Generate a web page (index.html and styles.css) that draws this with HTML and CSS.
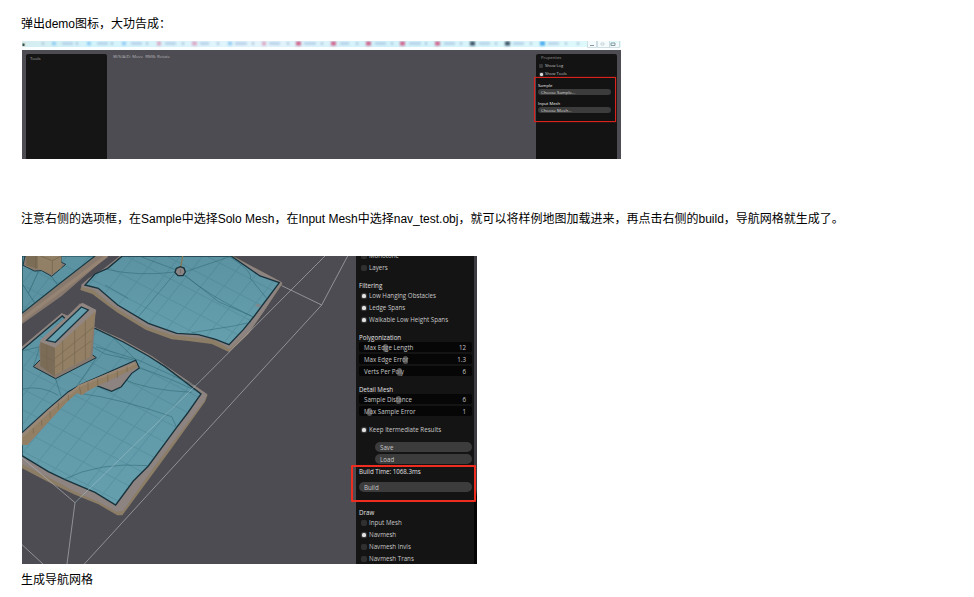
FILE: index.html
```html
<!DOCTYPE html>
<html lang="zh-CN">
<head>
<meta charset="utf-8">
<title>Recast Demo</title>
<link rel="stylesheet" href="styles.css">
</head>
<body>
<main>
<p class="intro">弹出demo图标，大功告成：</p>
<section class="demo">
  <div class="browser">
    <svg class="tabs" viewBox="22 41 599 9" width="599" height="9">
      <defs>
        <linearGradient id="sky"><stop offset="0" stop-color="#d5edf0"/><stop offset=".12" stop-color="#d3f4fb"/><stop offset=".4" stop-color="#e4f4fb"/><stop offset=".6" stop-color="#d2f2fa"/><stop offset="1" stop-color="#e0fafb"/></linearGradient>
        <filter id="soft" filterUnits="userSpaceOnUse" x="22" y="38" width="599" height="14"><feGaussianBlur stdDeviation=".8"/></filter>
      </defs>
      <rect x="22" y="41" width="599" height="9" fill="#fafefe"/>
      <rect x="22" y="41" width="599" height="6" fill="url(#sky)"/>
      <g filter="url(#soft)">
        <path d="M62 43.5h11M97 43.5h11M131 43.5h11M165 43.5h11M200 43.5h9M235 43.5h12M269 43.5h11M304 43.5h12M340 43.5h9M375 43.5h11M409 43.5h12M444 43.5h11M479 43.5h11M513 43.5h11M548 43.5h11" stroke="#a9c5e4" stroke-width="2"/>
        <path d="M42 43.5h2M76 43.5h2M111 43.5h2M146 43.5h2M182 43.5h2M217 43.5h2M252 43.5h2M287 43.5h2M321 43.5h2M356 43.5h2M391 43.5h2M425 43.5h2M460 43.5h2M495 43.5h2M530 43.5h2M565 43.5h2M577 43.5h2" stroke="#98afd0" stroke-width="2"/>
        <path d="M52 43.5h4M87 43.5h4M122 43.5h4M228 43.5h4" stroke="#8fcbf3" stroke-width="3.500"/>
        <path d="M157 43.5h4M192 43.5h5M262 43.5h4" stroke="#dca7c4" stroke-width="4"/>
        <path d="M296 43.5h5M331 43.5h5M366 43.5h5M400 43.5h5M435 43.5h5" stroke="#cf6088" stroke-width="4.2"/>
        <path d="M470 43.5h5M505 43.5h5" stroke="#364c60" stroke-width="4.2"/>
        <path d="M540 43.5h5" stroke="#42a8ee" stroke-width="4.2"/>
      </g>
      <path d="M587.500 41v6.500h9v-6.500M597.500 41v6.500h12v-6.500M609.500 47.500h10v-6.500" fill="#f4fbfd" stroke="#c3d0d6" stroke-width=".7"/>
      <path d="M590 45.500h4M611 43h4v2.500h-4z" fill="none" stroke="#8b999f"/><path d="M601 43h3v2h-3z" fill="none" stroke="#c9d5da"/>
      <rect x="22" y="42.500" width="4" height="4" fill="#d7dfdc"/><rect x="22.500" y="43.500" width="2" height="2.500" fill="#315344"/>
    </svg>
  </div>
  <div class="stage">
    <aside class="tools">Tools</aside>
    <span class="hint">W/S/A/D: Move &nbsp;RMB: Rotate</span>
    <aside class="props">
      <div class="title">Properties</div>
      <div class="opt"><i></i>Show Log</div>
      <div class="opt on"><i></i>Show Tools</div>
      <div class="choose">
        <b>Sample</b><span class="pill">Choose Sample...</span>
        <b class="second">Input Mesh</b><span class="pill">Choose Mesh...</span>
      </div>
    </aside>
  </div>
</section>
<p class="guide">注意右侧的选项框，在Sample中选择Solo Mesh，在Input Mesh中选择nav_test.obj，就可以将样例地图加载进来，再点击右侧的build，导航网格就生成了。</p>
<section class="result">
<svg class="scene" viewBox="21 18 1002 924" width="334" height="308">
  <defs>
    <pattern id="grid" width="48" height="44" patternUnits="userSpaceOnUse" patternTransform="matrix(1 .52 -.8 1 0 0)"><path d="M0 22H48M24 0V44" stroke="#2f6573" stroke-width="2.500" opacity=".2" fill="none"/></pattern>
    <linearGradient id="water" x2="0" y2="1"><stop stop-color="#5c93a2"/><stop offset="1" stop-color="#659fae"/></linearGradient>
  </defs>
  <rect x="21" y="18" width="1002" height="924" fill="#4d4c52"/>
  <!-- far left block -->
  <path d="M21 18H278L140 138L21 222Z" fill="#87796d"/>
  <path d="M21 215L278 22V18H266L21 202Z" fill="#958373"/>
  <path d="M21 18H240L128 105L21 190Z" fill="#5c93a2" stroke="#173b45" stroke-width="3.500"/>
  <path d="M21 18H240L128 105L21 190Z" fill="url(#grid)"/>
  <path d="M110 80L128 105M70 65L40 130L21 100M40 130L60 160" stroke="#2e6571" stroke-width="2" fill="none"/>
  <path d="M30 18L24 46L58 63L80 62L110 79L152 43L138 36V18Z" fill="#87796f" stroke="#173b45" stroke-width="3"/>
  <path d="M34 18H139V54L110 73L74 58L34 50Z" fill="#917f66"/>
  <path d="M34 18H68V56L34 47Z" fill="#7c6d57"/><path d="M76 18L112 32L139 18M112 32V72M62 18V56" stroke="#6f624c" stroke-width="2" fill="none"/>
  <!-- upper plateau -->
  <path d="M199 108L196 120L232 132L280 168L308 188L392 239L470 268L520 273L590 282L642 306L700 252L744 187L802 102L795 94L654 18H315L270 55Z" fill="#8b7d66"/>
  <path d="M199 104L200 111L235 119L290 165L310 178L392 229L470 255L535 262L595 268L644 297L704 242L746 185L802 98L795 94L650 18H315L270 53L222 84Z" fill="#8d8381"/>
  <path d="M322 18L278 55L240 72L210 105L250 115L308 165L400 220L485 250L550 254L602 268L642 284L685 239L718 198L793 98L735 78L648 18Z" fill="url(#water)" stroke="#17323c" stroke-width="4"/>
  <path d="M322 18L278 55L240 72L210 105L250 115L308 165L400 220L485 250L550 254L602 268L642 284L685 239L718 198L793 98L735 78L648 18Z" fill="url(#grid)"/>
  <path d="M275 58Q370 80 480 66M506 75Q590 142 713 200M510 75L610 155L713 200M480 70L366 205M372 18L490 62M512 65L650 18M640 18Q713 63 706 85L755 145M530 248L650 229L708 217M270 105L340 145" stroke="#29616e" stroke-width="2.500" fill="none" opacity=".55"/>
  <path d="M503 18L496 58" stroke="#877a55" stroke-width="4"/>
  <path d="M484 55L496 50L507 54L511 66L504 77H489L480 67Z" fill="#8b8484" stroke="#182f37" stroke-width="4"/><path d="M496 58v12" stroke="#666064" stroke-width="2"/>
  <path d="M719 169l8-8 12 4-6 7z" fill="#80888c"/>
  <!-- lower plateau -->
  <path d="M21 290L140 190L240 232L320 268L410 318L578 434L570 455L470 595L322 796L307 796L250 763L180 734L100 696L21 655Z" fill="#8b7d66"/>
  <path d="M21 290L140 190L240 232L320 268L410 318L576 432L568 452L424 642L324 782L304 785L250 755L180 725L100 682L21 642Z" fill="#8d8381"/>
  <path d="M21 300L142 198L170 225L242 236L325 276L400 318L450 350L558 432L518 489L485 532L400 648L355 693L302 765L240 727L150 689L100 665L21 617Z" fill="url(#water)" stroke="#17323c" stroke-width="4"/>
  <path d="M21 300L142 198L170 225L242 236L325 276L400 318L450 350L558 432L518 489L485 532L400 648L355 693L302 765L240 727L150 689L100 665L21 617Z" fill="url(#grid)"/>
  <path d="M21 303L75 290L55 350L122 387L138 438M243 325L190 403M160 250L270 312L365 332M243 290L370 330L535 405M276 245L365 332M376 355Q450 378 538 420M320 385Q390 420 530 427M195 430Q320 447 470 500L485 532M145 689Q250 635 400 647M21 417Q80 405 130 436" stroke="#285e6a" stroke-width="2.500" fill="none" opacity=".55"/>
  <!-- tower -->
  <path d="M55 350L75 330L72 285L195 160L242 180L233 315L244 323L122 386Z" fill="#857970"/>
  <path d="M75 330L55 350L122 386L244 323L233 315" fill="none" stroke="#17323c" stroke-width="3"/>
  <path d="M74 278L78 268L202 158L244 180L238 200L120 296Z" fill="#918681"/>
  <path d="M76 276L120 293V380L76 348Z" fill="#7b6c57"/>
  <path d="M120 293L242 184L225 321L120 375Z" fill="#927f64"/>
  <path d="M95 271L199 171L220 180L121 277Z" fill="#659fae" stroke="#173540" stroke-width="4"/>
  <path d="M143 272V362M179 240V344M211 212V328M120 325L235 232M120 352L230 272M80 315L120 335M95 284V358" stroke="#74664e" stroke-width="2" fill="none"/>
  <!-- ramp -->
  <path d="M21 548L98 478L160 425L196 404L362 331L373 354L350 370L319 410L290 424L245 407L202 434L185 430L155 455L38 585L21 584Z" fill="#8d8381"/>
  <path d="M21 548L98 478L160 425L196 404L362 331L373 354L350 370L319 410L290 424L245 407" fill="none" stroke="#17323c" stroke-width="3.500"/>
  <path d="M21 562L100 492L160 435L193 409L365 339L367 352L216 423L202 435L185 430L155 457L36 585L21 584Z" fill="#927f64"/>
  <path d="M21 560L105 480L193 408L360 341" fill="none" stroke="#9a8874" stroke-width="7"/>
  <path d="M105 485v18M130 458v20M160 434v18M193 410l5 23M219 397v24M248 386v22M278 374v22M307 362v22M336 350v16M80 510v16M55 534v16" stroke="#74664e" stroke-width="2"/>
  <!-- bounds -->
  <path d="M930 18L558 391M180 758L156 942M21 623L180 758M998 18L920 165L800 107M920 165L208 942M21 884L84 942" fill="none" stroke="#aaa9ae" stroke-width="2.800" opacity=".8"/>
  <path d="M558 391L180 758" fill="none" stroke="#a3c6cd" stroke-width="2.800" opacity=".55"/>
</svg>
<aside class="panel">
  <div class="row opt"><i></i>Monotone</div>
  <div class="row opt"><i></i>Layers</div>
  <div class="row head gap6">Filtering</div>
  <div class="row opt on less"><i></i>Low Hanging Obstacles</div>
  <div class="row opt on"><i></i>Ledge Spans</div>
  <div class="row opt on"><i></i>Walkable Low Height Spans</div>
  <div class="row head gap6">Polygonization</div>
  <div class="row slider less"><span>Max Ed<u></u>ge Length</span><span>12</span></div>
  <div class="row slider"><span>Max Edge Erro<u></u>r</span><span>1.3</span></div>
  <div class="row slider"><span>Verts Per Po<u></u>ly</span><span>6</span></div>
  <div class="row head gap6">Detail Mesh</div>
  <div class="row slider less"><span>Sample Dist<u></u>ance</span><span>6</span></div>
  <div class="row slider"><span>M<u></u>ax Sample Error</span><span>1</span></div>
  <div class="row opt on gap6"><i></i>Keep Itermediate Results</div>
  <div class="row button indent gap6"><span>Save</span></div>
  <div class="row button indent"><span>Load</span></div>
  <div class="row head">Build Time: 1068.3ms</div>
  <div class="row button gap4"><span>Build</span></div>
  <div class="rule"></div>
  <div class="row head">Draw</div>
  <div class="row opt less"><i></i>Input Mesh</div>
  <div class="row opt on"><i></i>Navmesh</div>
  <div class="row opt"><i></i>Navmesh Invis</div>
  <div class="row opt"><i></i>Navmesh Trans</div>
</aside>
<div class="edge"></div>
<div class="mark"></div>
</section>
<p class="caption">生成导航网格</p>
</main>
</body>
</html>
```

FILE: styles.css
```css
* { box-sizing: border-box; }
body { margin: 0; background: #fff; color: #000; font: 12px/18px "Liberation Sans", "Noto Sans CJK SC", sans-serif; overflow: hidden; }
main { height: 597px; padding: 15px 0 0 21px; }
p { margin: 0; height: 18px; white-space: nowrap; }
.demo { width: 599px; height: 118px; margin: 8px 0 0 1px; overflow: hidden; font-family: "Open Sans", sans-serif; }
.browser { height: 9px; }
.tabs { display: block; }
.stage { display: flex; height: 109px; padding: 4px 4px 0; background: #4d4c52; color: #c4c4c4; font-size: 4.3px; line-height: 8px; }
.tools { width: 81px; height: 105px; padding-left: 4px; border-radius: 2px 2px 0 0; background: #151515; color: #aaa; }
.hint { flex: 1; padding-left: 6px; color: #b3b2b7; line-height: 4px; }
.props { width: 81px; height: 105px; padding-left: 3px; border-radius: 2px 2px 0 0; background: #131313; }
.title { padding-left: 2px; color: #999; font-size: 4.2px; }
.props .opt { height: 8px; font-size: 4.1px; }
.opt { display: flex; align-items: center; }
.opt i { width: 4px; height: 4px; margin-right: 2px; border-radius: 1px; background: #383838; }
.props .on i { width: 3px; height: 3px; margin: 0 2px 0 1px; }
.on i { background: #ddd; box-shadow: 0 0 0 1px #333; }
.choose { display: flex; flex-direction: column; width: 82px; height: 45px; margin: -1px 0 0 -5px; padding: 5px 4px 0 3px; border: 1px solid #d9241e; box-shadow: 0 0 1px #b0201a; }
.choose b { height: 6px; color: #eee; font-size: 4.2px; line-height: 5px; font-weight: 400; }
.choose .second { margin-top: 6px; }
.pill { width: 73px; height: 6px; padding-left: 3px; border-radius: 3px; background: #3c3c3c; color: #ddd; line-height: 6px; }
.guide { margin-top: 51px; }
.result { position: relative; display: flex; width: 455px; height: 308px; margin: 28px 0 0 1px; background: #000; }
.scene { display: block; flex: none; }
.panel { width: 118px; height: 308px; padding: 0 2px 0 3px; overflow: hidden; background: #141414; color: #c8c8c8; font: 6.2px/13.5px "Open Sans", "Noto Sans", sans-serif; }
.panel .row { height: 12px; white-space: nowrap; }
.panel .row:first-child { margin-top: -7px; }
.panel .gap6 { margin-top: 6px; }
.panel .gap4 { margin-top: 4px; }
.panel .less { margin-top: -2px; }
.panel .opt { padding-left: 2px; }
.panel .opt i { width: 6px; height: 6px; border-radius: 2px; background: #303030; }
.panel .on i { width: 4px; height: 4px; margin: 0 3px 0 1px; border-radius: 1.5px; background: #e2e2e2; box-shadow: 0 0 1px 1px #444; }
.panel .opt { padding-top: 1px; }
.panel .head { color: #e2e2e2; }
.panel .slider { display: flex; justify-content: space-between; padding: 0 6px 0 5px; border-radius: 3px; border: solid #141414; border-width: 1px 0; background: #060606; line-height: 11.5px; }
.slider u { display: inline-block; width: 5px; height: 8px; margin: 0 -2.5px; border-radius: 3px; background: #888; opacity: .6; vertical-align: -2px; }
.button { padding-top: 1px; }
.button span { display: block; height: 10px; padding-left: 5px; border-radius: 5px; background: #3c3c3c; line-height: 11px; }
.indent { padding-left: 16px; }
.rule { height: 13px; }
.edge { width: 3px; background: linear-gradient(#3d3c41 0 76%, #050505 78%); }
.mark { position: absolute; left: 329px; top: 209px; width: 125px; height: 37px; border: 2px solid #ee2c20; border-radius: 1px; }
.caption { margin-top: 7px; }
```
